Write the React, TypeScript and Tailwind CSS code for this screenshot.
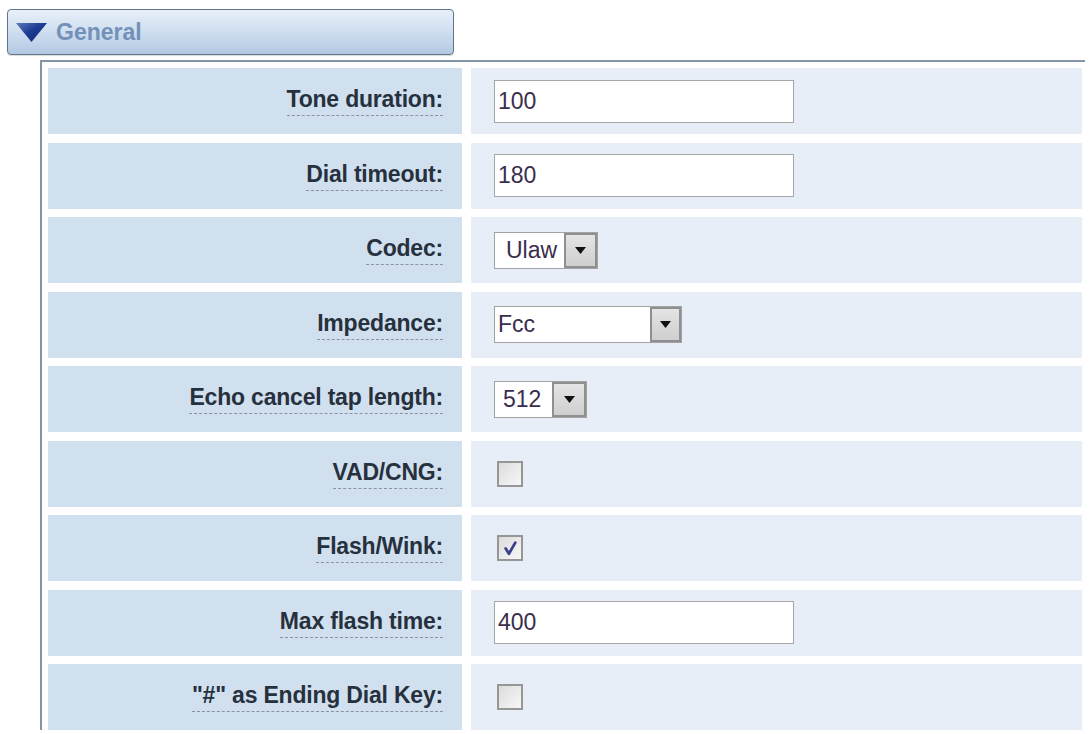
import React from 'react';

type Field =
  | { label: string; kind: 'text'; value: string }
  | { label: string; kind: 'select'; value: string; width: string; textPad: string; btnWidth: string }
  | { label: string; kind: 'check'; checked: boolean };

const fields: Field[] = [
  { label: 'Tone duration:', kind: 'text', value: '100' },
  { label: 'Dial timeout:', kind: 'text', value: '180' },
  { label: 'Codec:', kind: 'select', value: 'Ulaw', width: 'w-[104px]', textPad: 'pl-[11px]', btnWidth: 'w-[33px]' },
  { label: 'Impedance:', kind: 'select', value: 'Fcc', width: 'w-[188px]', textPad: 'pl-[3px]', btnWidth: 'w-[31px]' },
  { label: 'Echo cancel tap length:', kind: 'select', value: '512', width: 'w-[93px]', textPad: 'pl-[8px]', btnWidth: 'w-[34px]' },
  { label: 'VAD/CNG:', kind: 'check', checked: false },
  { label: 'Flash/Wink:', kind: 'check', checked: true },
  { label: 'Max flash time:', kind: 'text', value: '400' },
  { label: '"#" as Ending Dial Key:', kind: 'check', checked: false },
];

const SelectBox: React.FC<{ value: string; width: string; textPad: string; btnWidth: string }> = ({ value, width, textPad, btnWidth }) => (
  <div className={`${width} h-[37px] flex border border-[#a3a3a3] bg-white`}>
    <span className={`flex-1 flex items-center ${textPad} text-[23px] text-[#3a2d4d] leading-none`}>{value}</span>
    <span className={`${btnWidth} h-full flex items-center justify-center border-2 border-[#8f8f8f] bg-gradient-to-b from-[#e4e4e4] to-[#cfcfcf]`}>
      <svg width="11" height="7" viewBox="0 0 11 7">
        <polygon points="0,0 11,0 5.5,7" fill="#111" />
      </svg>
    </span>
  </div>
);

const CheckBox: React.FC<{ checked: boolean }> = ({ checked }) => (
  <div className="ml-[3px] w-[26px] h-[26px] border-2 border-[#969696] bg-gradient-to-br from-[#dcdcdc] to-[#f7f7f7] flex items-center justify-center">
    {checked && (
      <svg width="17" height="17" viewBox="0 0 16 16">
        <path d="M3.5 8 L6.5 13 L12.5 2.5" fill="none" stroke="#3b3f8c" strokeWidth="2.6" strokeLinecap="round" strokeLinejoin="round" />
      </svg>
    )}
  </div>
);

const App: React.FC = () => {
  return (
    <div className="min-h-screen bg-white font-['Liberation_Sans',Arial,sans-serif] pt-[9px] pl-[7px] overflow-hidden">
      <div className="w-[447px] h-[46px] rounded-[4px] border border-[#61758b] bg-gradient-to-b from-[#e8f0f9] via-[#cfdef0] to-[#b2c9e2] flex items-center pl-[8px] shadow-[0_1px_1px_rgba(0,0,0,0.15)]">
        <svg width="31" height="19" viewBox="0 0 31 19">
          <defs>
            <linearGradient id="tri" x1="0" y1="0" x2="1" y2="1">
              <stop offset="0" stopColor="#5c7bbd" />
              <stop offset="0.45" stopColor="#1d3c93" />
              <stop offset="1" stopColor="#10286e" />
            </linearGradient>
          </defs>
          <polygon points="0,0 31,0 15.5,19" fill="url(#tri)" />
        </svg>
        <span className="ml-[9px] text-[23px] font-bold text-[#7391b8] leading-none">General</span>
      </div>

      <div className="mt-[5px] ml-[33px] w-[1045px] border-l-2 border-t-2 border-[#8594a6] pt-[6px] pl-[6px] pr-[3px] flex flex-col gap-y-[8.5px]">
        {fields.map((f) => (
          <div key={f.label} className="flex gap-x-[9px] h-[66px]">
            <div className="w-[414px] shrink-0 bg-[#d0e0ef] flex items-center justify-end pr-[19px]">
              <span className="text-[23px] font-bold text-[#27303d] leading-[26px] pb-[3px] border-b border-dashed border-[#8a93a0] tracking-[-0.2px]">
                {f.label}
              </span>
            </div>
            <div className="flex-1 bg-[#e7eef8] flex items-center pl-[23px]">
              {f.kind === 'text' && (
                <div className="w-[300px] h-[43px] border border-[#a6a6a6] bg-white flex items-center pl-[3px] text-[23px] text-[#3a2d4d] leading-none">
                  {f.value}
                </div>
              )}
              {f.kind === 'select' && (
                <SelectBox value={f.value} width={f.width} textPad={f.textPad} btnWidth={f.btnWidth} />
              )}
              {f.kind === 'check' && <CheckBox checked={f.checked} />}
            </div>
          </div>
        ))}
      </div>
    </div>
  );
};

export default App;
